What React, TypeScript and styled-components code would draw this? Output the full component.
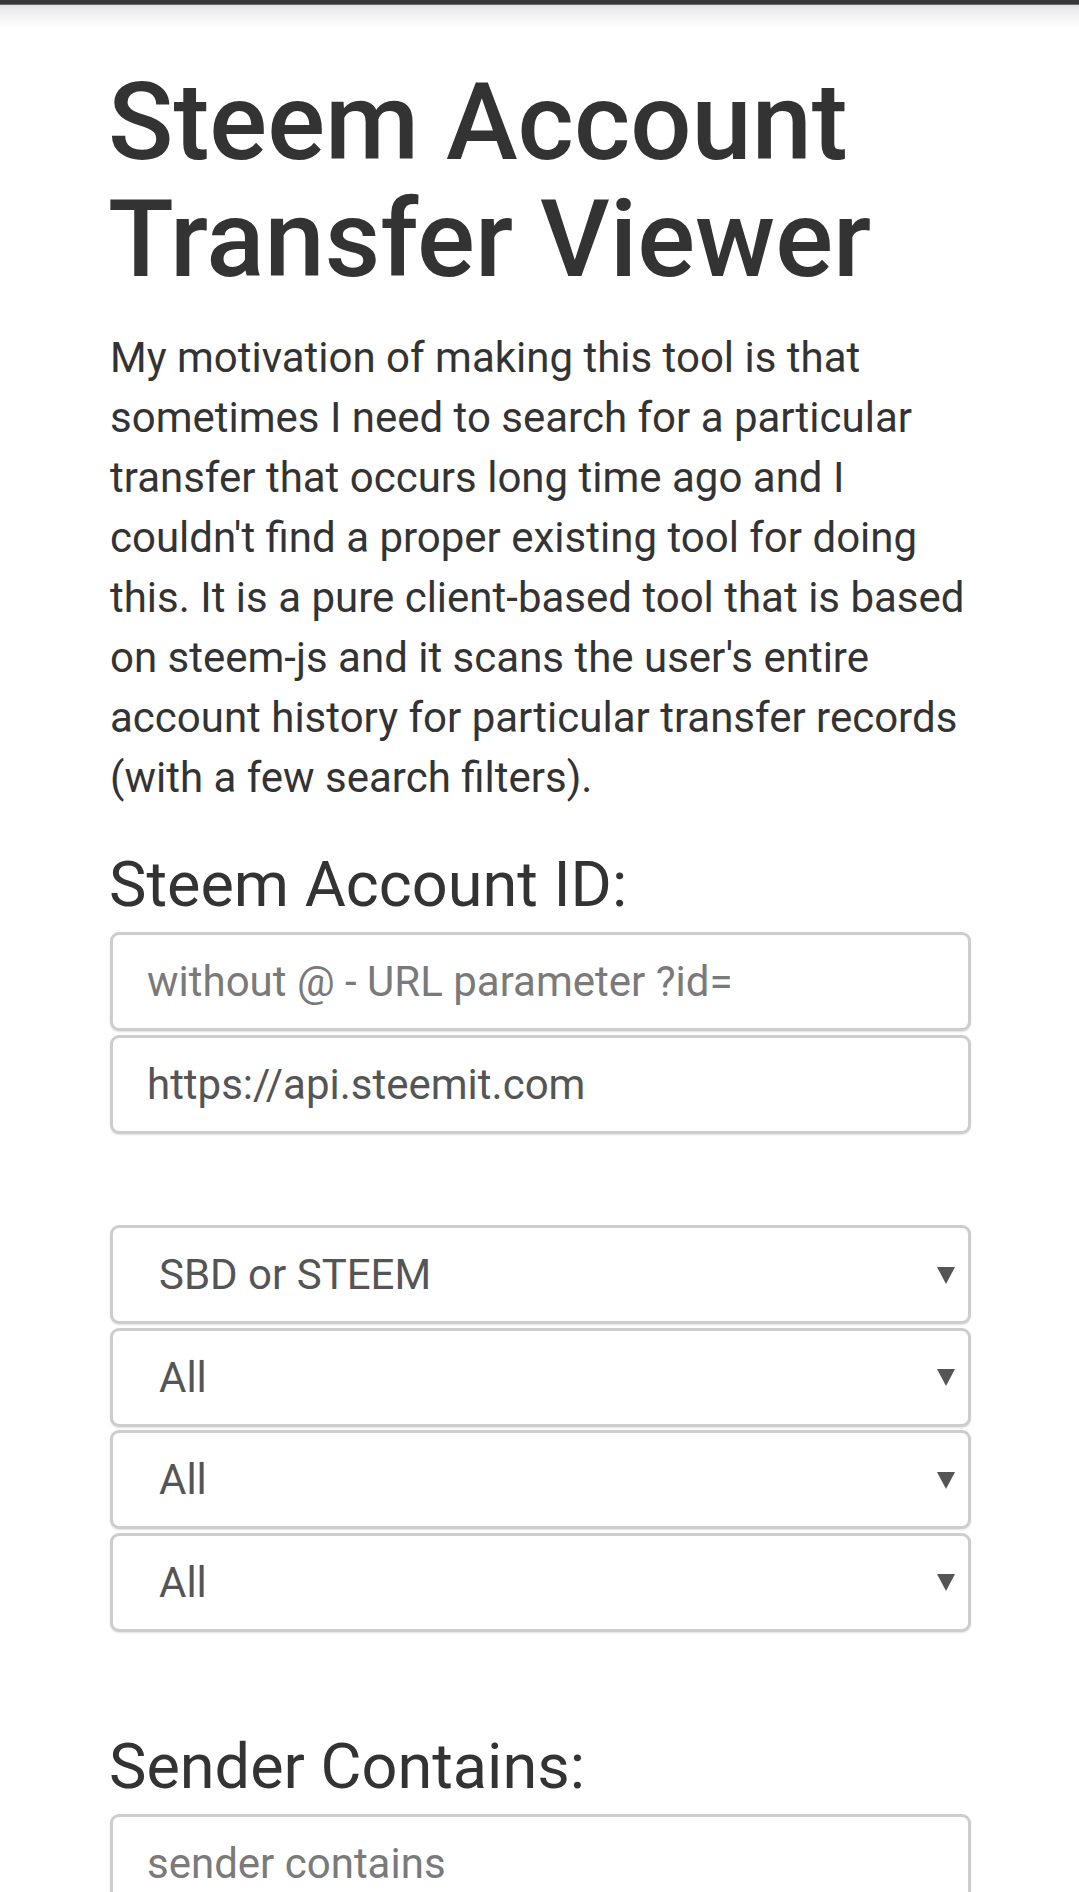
import React from "react";
import styled, { createGlobalStyle } from "styled-components";

const Global = createGlobalStyle`
  html, body {
    margin: 0;
    padding: 0;
    background: #ffffff;
  }
  body {
    font-family: Roboto, "Noto Sans", "Liberation Sans", sans-serif;
    color: #333333;
  }
  * { box-sizing: border-box; }
`;

const TopBar = styled.div`
  height: 5px;
  background: #36373b;
  border-bottom: 1px solid #6a6a6a;
`;

const Shade = styled.div`
  height: 24px;
  background: linear-gradient(to bottom, #e2e2e2 0%, #f4f4f4 45%, #ffffff 100%);
`;

const Container = styled.main`
  padding: 0 108px 0 110px;
`;

const Title = styled.h1`
  margin: 35px 0 30px -2px;
  font-size: 108px;
  line-height: 117px;
  font-weight: 500;
  color: #333333;
`;

const Intro = styled.p`
  margin: 0;
  font-size: 42px;
  line-height: 60px;
  color: #333333;
`;

const Label = styled.h2<{ $top: number }>`
  margin: ${(p) => p.$top}px 0 13px -1px;
  font-size: 63px;
  line-height: 68px;
  font-weight: 400;
  color: #333333;
`;

const Stack = styled.div<{ $gap: number }>`
  display: flex;
  flex-direction: column;
  gap: ${(p) => p.$gap}px;
`;

const TextField = styled.input`
  display: block;
  width: 100%;
  height: 99px;
  margin: 0;
  padding: 0 20px 0 34px;
  border: 3px solid #cdcdcd;
  border-radius: 9px;
  box-shadow: 0 1px 2px rgba(0, 0, 0, 0.12);
  background: #ffffff;
  font-family: Roboto, "Noto Sans", "Liberation Sans", sans-serif;
  font-size: 42px;
  color: #555555;
  outline: none;
  &::placeholder {
    color: #7a7a7a;
    opacity: 1;
  }
`;

const Spacer = styled.div<{ $h: number }>`
  height: ${(p) => p.$h}px;
`;

const SelectWrap = styled.div`
  position: relative;
  width: 100%;
`;

const Select = styled.select`
  display: block;
  width: 100%;
  height: 99px;
  margin: 0;
  padding: 0 60px 0 46px;
  appearance: none;
  -webkit-appearance: none;
  border: 3px solid #cdcdcd;
  border-radius: 9px;
  box-shadow: 0 1px 2px rgba(0, 0, 0, 0.12);
  background: #ffffff;
  font-family: Roboto, "Noto Sans", "Liberation Sans", sans-serif;
  font-size: 42px;
  color: #555555;
  outline: none;
`;

const Arrow = styled.svg`
  position: absolute;
  right: 16px;
  top: 50%;
  width: 18px;
  height: 17px;
  margin-top: -8px;
  pointer-events: none;
`;

const Dropdown = ({ options }: { options: string[] }) => (
  <SelectWrap>
    <Select defaultValue={options[0]}>
      {options.map((o) => (
        <option key={o}>{o}</option>
      ))}
    </Select>
    <Arrow viewBox="0 0 18 17">
      <polygon points="0,0 18,0 9,17" fill="#555555" />
    </Arrow>
  </SelectWrap>
);

export default function App() {
  return (
    <>
      <Global />
      <TopBar />
      <Shade />
      <Container>
        <Title>Steem Account Transfer Viewer</Title>
        <Intro>
          My motivation of making this tool is that sometimes I need to search for a particular
          transfer that occurs long time ago and I couldn't find a proper existing tool for doing
          this. It is a pure client-based tool that is based on steem-js and it scans the user's
          entire account history for particular transfer records (with a few search filters).
        </Intro>
        <Label $top={43}>Steem Account ID:</Label>
        <Stack $gap={4}>
          <TextField placeholder="without @ - URL parameter ?id=" />
          <TextField defaultValue="https://api.steemit.com" />
        </Stack>
        <Spacer $h={91} />
        <Stack $gap={3.5}>
          <Dropdown options={["SBD or STEEM", "SBD", "STEEM"]} />
          <Dropdown options={["All", "Incoming", "Outgoing"]} />
          <Dropdown options={["All", "With Memo", "Without Memo"]} />
          <Dropdown options={["All", "Encrypted", "Plain"]} />
        </Stack>
        <Label $top={101}>Sender Contains:</Label>
        <Stack $gap={4}>
          <TextField placeholder="sender contains" />
        </Stack>
        <Spacer $h={200} />
      </Container>
    </>
  );
}
